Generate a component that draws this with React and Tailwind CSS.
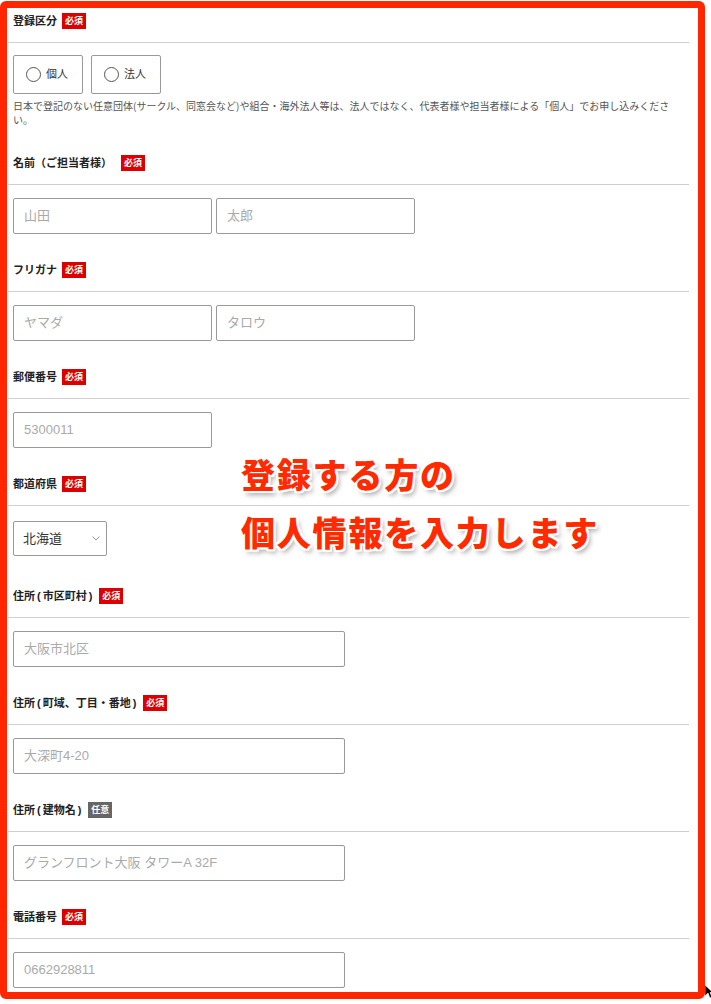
import React from "react";

const Badge = ({ opt }) =>
  opt ? (
    <span className="inline-flex items-center justify-center w-[24px] h-[16px] bg-[#666666] text-white text-[9px] font-bold leading-none">任意</span>
  ) : (
    <span className="inline-flex items-center justify-center w-[24px] h-[16px] bg-[#dd0000] text-white text-[9px] font-bold leading-none">必須</span>
  );

const renderLabel = (text) =>
  text.split(/([()])/).map((part, i) =>
    part === "(" || part === ")" ? (
      <span key={i} className="mx-[2px]">{part}</span>
    ) : (
      <React.Fragment key={i}>{part}</React.Fragment>
    )
  );

const Label = ({ text, opt, gap }) => (
  <div className={`h-[16px] ml-[6px] flex items-center ${gap || "gap-[5px]"}`}>
    <span className="text-[11px] font-bold text-[#222] leading-none">{renderLabel(text)}</span>
    <Badge opt={opt} />
  </div>
);

const Divider = () => <div className="mt-[13px] h-px w-[681px] ml-[1px] bg-[#cfcfcf]" />;

const Field = ({ ph, w }) => (
  <div className={`${w} h-[36px] border border-[#999] rounded-[2px] flex items-center pl-[10px] text-[13px] text-[#aaa] bg-white`}>
    {ph}
  </div>
);

const Radio = ({ text }) => (
  <div className="w-[70px] h-[39px] border border-[#999] rounded-[2px] flex items-center pl-[12px] gap-[5px]">
    <span className="w-[15px] h-[15px] rounded-full border border-[#555]" />
    <span className="text-[11px] text-[#333]">{text}</span>
  </div>
);

export default function App() {
  return (
    <div className="relative w-[711px] h-[1004px] bg-white overflow-hidden font-['Liberation_Sans','Noto_Sans_CJK_JP',sans-serif]">
      <div className="mt-[1px] w-[705px] h-[998px] border-[7px] border-[#ff2600] rounded-[6px] pt-[5px] overflow-hidden">
        {/* 登録区分 */}
        <Label text="登録区分" />
        <Divider />
        <div className="mt-[12px] ml-[6px] flex gap-[8px]">
          <Radio text="個人" />
          <Radio text="法人" />
        </div>
        <div className="mt-[5px] ml-[6px] text-[10px] leading-[14px] text-[#555] font-['Noto_Sans_CJK_JP',sans-serif]">
          <div className="whitespace-nowrap">日本で登記のない任意団体(サークル、同窓会など)や組合・海外法人等は、法人ではなく、代表者様や担当者様による「個人」でお申し込みくださ</div>
          <div>い。</div>
        </div>

        {/* 名前 */}
        <div className="mt-[28px]">
          <Label text="名前（ご担当者様）" gap="gap-[9px]" />
          <Divider />
          <div className="mt-[13px] ml-[6px] flex gap-[4px]">
            <Field ph="山田" w="w-[199px]" />
            <Field ph="太郎" w="w-[199px]" />
          </div>
        </div>

        {/* フリガナ */}
        <div className="mt-[28px]">
          <Label text="フリガナ" />
          <Divider />
          <div className="mt-[13px] ml-[6px] flex gap-[4px]">
            <Field ph="ヤマダ" w="w-[199px]" />
            <Field ph="タロウ" w="w-[199px]" />
          </div>
        </div>

        {/* 郵便番号 */}
        <div className="mt-[28px]">
          <Label text="郵便番号" />
          <Divider />
          <div className="mt-[13px] ml-[6px] flex">
            <Field ph="5300011" w="w-[199px]" />
          </div>
        </div>

        {/* 都道府県 */}
        <div className="mt-[28px]">
          <Label text="都道府県" />
          <Divider />
          <div className="mt-[15px] ml-[6px] w-[94px] h-[35px] border border-[#999] rounded-[2px] flex items-center justify-between pl-[9px] pr-[6px]">
            <span className="text-[13px] text-[#333]">北海道</span>
            <svg width="8" height="5" viewBox="0 0 8 5" fill="none">
              <path d="M0.5 0.5 L4 4 L7.5 0.5" stroke="#999" strokeWidth="1" />
            </svg>
          </div>
        </div>

        {/* 住所(市区町村) */}
        <div className="mt-[32px]">
          <Label text="住所(市区町村)" />
          <Divider />
          <div className="mt-[13px] ml-[6px] flex">
            <Field ph="大阪市北区" w="w-[332px]" />
          </div>
        </div>

        {/* 住所(町域) */}
        <div className="mt-[28px]">
          <Label text="住所(町域、丁目・番地)" />
          <Divider />
          <div className="mt-[13px] ml-[6px] flex">
            <Field ph="大深町4-20" w="w-[332px]" />
          </div>
        </div>

        {/* 住所(建物名) */}
        <div className="mt-[28px]">
          <Label text="住所(建物名)" opt />
          <Divider />
          <div className="mt-[13px] ml-[6px] flex">
            <Field ph="グランフロント大阪 タワーA 32F" w="w-[332px]" />
          </div>
        </div>

        {/* 電話番号 */}
        <div className="mt-[28px]">
          <Label text="電話番号" />
          <Divider />
          <div className="mt-[13px] ml-[6px] flex">
            <Field ph="0662928811" w="w-[332px]" />
          </div>
        </div>
      </div>

      {/* overlay annotation */}
      <div className="absolute left-[241px] top-[445px] text-[34px] leading-[58px] font-black tracking-[1.8px] text-[#ff2a00] font-['Noto_Sans_CJK_JP',sans-serif] [text-shadow:2px_0_0_#fff,-2px_0_0_#fff,0_2px_0_#fff,0_-2px_0_#fff,2px_2px_0_#fff,-2px_-2px_0_#fff,2px_-2px_0_#fff,-2px_2px_0_#fff,3px_4px_5px_rgba(0,0,0,0.35)]">
        <div>登録する方の</div>
        <div>個人情報を入力します</div>
      </div>

      {/* cursor */}
      <svg className="absolute left-[705px] top-[985px]" width="8" height="14" viewBox="0 0 8 14">
        <path d="M0 0 L0 11 L3 8 L5 13 L7 12 L5 7.5 L8 7.5 Z" fill="#000" stroke="#fff" strokeWidth="0.6" />
      </svg>
    </div>
  );
}
